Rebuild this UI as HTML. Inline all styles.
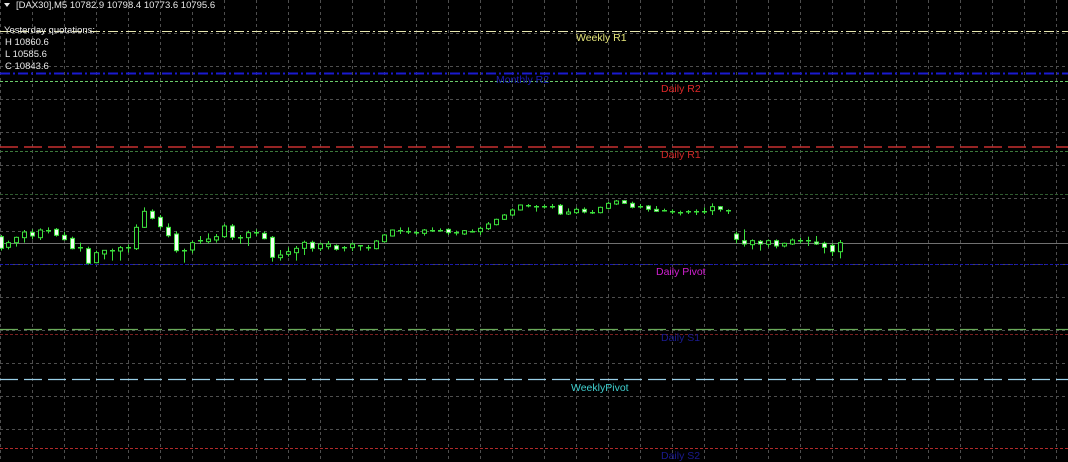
<!DOCTYPE html>
<html><head><meta charset="utf-8"><style>
html,body{margin:0;padding:0;background:#000;width:1068px;height:462px;overflow:hidden}
svg{display:block}
text{font-family:"Liberation Sans",sans-serif}
</style></head><body>
<svg id="s" width="1068" height="462" xmlns="http://www.w3.org/2000/svg">
<rect width="1068" height="462" fill="#000"/>
<g id="grid" stroke="#4e4e4e" stroke-width="1" stroke-dasharray="3,3"></g>
<line x1="0" y1="31.5" x2="1068" y2="31.5" stroke="#e8e8b0" stroke-dasharray="10,3,2,3"/>
<line x1="0" y1="73.5" x2="1068" y2="73.5" stroke="#1a1ad0" stroke-width="2" stroke-dasharray="10,3,2,3"/>
<line x1="0" y1="81.5" x2="1068" y2="81.5" stroke="#6acc6a" stroke-dasharray="3,2"/>
<line x1="0" y1="147" x2="1068" y2="147" stroke="#c83030" stroke-width="1.5" stroke-dasharray="18,6"/>
<line x1="0" y1="151.5" x2="1068" y2="151.5" stroke="#3c7a3c" stroke-dasharray="3,2"/>
<line x1="0" y1="194.5" x2="1068" y2="194.5" stroke="#2f5a2f" stroke-dasharray="3,2"/>
<line x1="0" y1="243.5" x2="1068" y2="243.5" stroke="#707070"/>
<line x1="0" y1="264.5" x2="1068" y2="264.5" stroke="#1818b0" stroke-dasharray="3,2"/>
<line x1="0" y1="329.5" x2="1068" y2="329.5" stroke="#6aaa5a" stroke-width="1.3" stroke-dasharray="18,6"/>
<line x1="0" y1="334.5" x2="1068" y2="334.5" stroke="#7a2020" stroke-dasharray="3,2"/>
<line x1="0" y1="379.5" x2="1068" y2="379.5" stroke="#9ad0e8" stroke-width="1.3" stroke-dasharray="18,6"/>
<line x1="0" y1="448.5" x2="1068" y2="448.5" stroke="#b02a2a" stroke-dasharray="3,2"/>
<g id="c"></g>
<g font-size="10.5">
<text x="576" y="41" fill="#e6e67a">Weekly R1</text>
<text x="496" y="83" fill="#1a1ab8">Monthly R2</text>
<text x="661" y="92" fill="#e02828">Daily R2</text>
<text x="661" y="158" fill="#d02828">Daily R1</text>
<text x="656" y="275" fill="#d020d0">Daily Pivot</text>
<text x="661" y="341" fill="#1a1a90">Daily S1</text>
<text x="571" y="391" fill="#40d0d0">WeeklyPivot</text>
<text x="661" y="459" fill="#1a1a90">Daily S2</text>
</g>
<g font-size="9.5" fill="#e8e8e8">
<text x="16" y="8">[DAX30],M5  10782.9 10798.4 10773.6 10795.6</text>
<polygon points="4,3 10,3 7,7" fill="#e8e8e8"/>
<text x="4" y="33">Yesterday quotations:</text>
<text x="5" y="45">H 10860.6</text>
<text x="5" y="57">L 10585.6</text>
<text x="5" y="69">C 10843.6</text>
</g>
</svg>
<script>
var g=document.getElementById('grid'),h='';
for(var x=0;x<=1068;x+=32)h+='<line x1="'+(x+.5)+'" y1="0" x2="'+(x+.5)+'" y2="462"/>';
for(var y=33;y<462;y+=33)h+='<line x1="0" y1="'+(y+.5)+'" x2="1068" y2="'+(y+.5)+'"/>';
g.innerHTML=h;
var A=[[1,135,140,175,182,'w'],[8,152,158,172,178,'h'],[16,140,142,158,170,'h'],[24,120,126,143,158,'h'],[32,118,127,138,148,'w'],[40,115,120,143,150,'h'],[48,112,121,124,130,'c'],[56,114,118,136,140,'w'],[64,125,136,149,152,'w'],[72,140,145,176,178,'w'],[80,158,171,174,185,'c'],[88,170,176,220,224,'w'],[96,182,188,218,220,'h'],[104,180,181,192,208,'h'],[112,176,181,184,212,'c'],[120,168,173,183,212,'h'],[128,163,171,174,188,'c'],[136,103,112,176,180,'h'],[144,52,64,112,114,'h'],[152,58,64,85,88,'w'],[160,75,82,110,118,'w'],[168,100,112,137,142,'w'],[176,124,132,182,188,'w'],[184,176,179,182,218,'c'],[192,152,158,180,190,'h'],[200,138,151,154,162,'c'],[208,130,147,155,160,'h'],[216,132,140,150,158,'h'],[224,102,108,140,144,'h'],[232,102,108,142,150,'w'],[240,135,141,144,162,'c'],[248,122,128,143,168,'h'],[256,118,127,130,138,'c'],[264,124,130,146,148,'w'],[272,138,142,202,215,'w'],[280,180,195,203,212,'h'],[288,172,185,193,200,'h'],[296,168,175,188,212,'h'],[304,152,157,175,195,'h'],[312,152,157,175,185,'w'],[320,158,162,176,183,'h'],[328,153,162,170,178,'h'],[336,163,167,178,182,'w'],[344,168,172,175,184,'c'],[352,158,162,173,183,'h'],[360,165,166,169,182,'c'],[368,165,172,175,182,'c'],[376,150,153,176,178,'h'],[384,132,135,155,158,'h'],[392,118,120,138,140,'h'],[400,112,119,124,132,'c'],
[408,112,124,127,132,'c'],[416,122,127,130,135,'c'],[424,117,120,130,137,'h'],[432,112,119,122,126,'c'],[440,115,119,122,125,'c'],[448,115,118,128,135,'w'],[456,122,127,130,136,'c'],[464,120,122,132,135,'h'],[472,118,122,125,128,'c'],[480,110,115,125,135,'h'],[488,96,102,116,120,'h'],[496,86,88,104,106,'h'],[504,72,75,88,90,'h'],[512,55,60,75,78,'h'],[520,43,45,60,62,'h'],[528,42,46,49,52,'c'],[536,45,49,52,65,'c'],[544,44,49,52,56,'c'],[552,42,47,50,56,'c'],[560,42,46,72,75,'w'],[568,55,66,72,75,'h'],[576,52,58,68,72,'h'],[584,52,58,66,70,'w'],[592,60,65,68,72,'c'],[600,50,52,68,70,'h'],[608,35,40,55,58,'h'],[616,30,33,42,45,'h'],[624,30,32,40,42,'w'],[632,35,40,52,55,'w'],[640,42,47,50,56,'c'],[648,45,48,58,65,'w'],[656,48,58,64,66,'w'],[664,56,59,62,65,'c'],[672,58,64,67,72,'c'],[680,62,67,70,76,'c'],[688,60,64,67,72,'c'],[696,58,64,67,75,'c'],[704,52,62,65,72,'c'],[712,40,50,62,75,'h'],[720,48,50,58,65,'w'],[728,58,61,64,72,'c'],
[736,125,132,148,160,'w'],[744,118,152,162,170,'w'],[752,148,152,164,178,'h'],[760,150,154,162,182,'w'],[768,148,152,163,172,'h'],[776,148,152,168,175,'w'],[784,158,160,168,172,'h'],[792,145,150,162,165,'h'],[800,143,151,154,160,'c'],[808,140,151,154,168,'c'],[816,138,156,162,165,'w'],[824,155,160,172,190,'w'],[832,160,166,185,198,'w'],[840,150,158,185,205,'h']];
var c='';
function Y(v){return 190+v/3;}
A.forEach(function(a){
 var x=a[0],wt=Y(a[1]),bt=Y(a[2]),bb=Y(a[3]),wb=Y(a[4]),t=a[5],col='#3ce03c';
 c+='<line x1="'+(x+.5)+'" y1="'+wt+'" x2="'+(x+.5)+'" y2="'+wb+'" stroke="'+col+'"/>';
 if(t=='c'){c+='<rect x="'+(x-2)+'" y="'+Math.round(bt)+'" width="5" height="1.5" fill="'+col+'"/>';}
 else{var hh=Math.max(2,bb-bt);c+='<rect x="'+(x-1.5)+'" y="'+bt+'" width="4" height="'+hh+'" fill="'+(t=='w'?'#f4fff4':'#000')+'" stroke="'+col+'" stroke-width="1"/>';}
});
document.getElementById('c').innerHTML=c;
</script>
</body></html>
